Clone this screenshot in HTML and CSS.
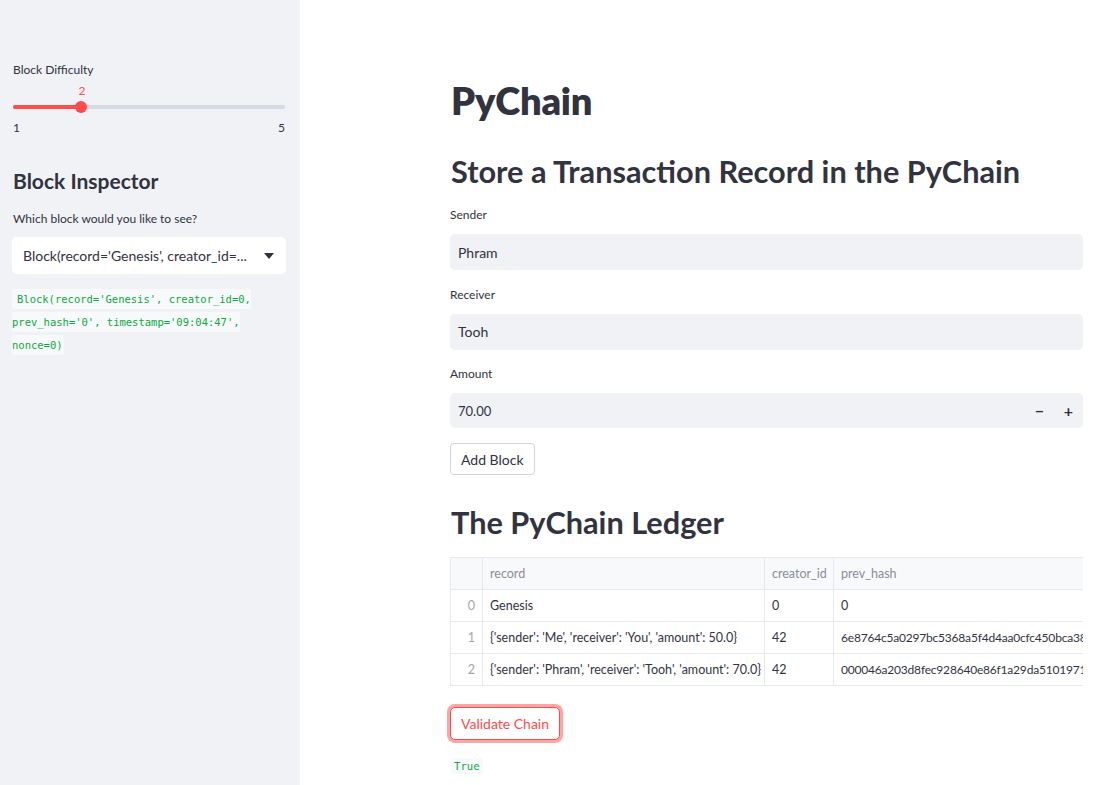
FILE: index.html
```html
<!DOCTYPE html>
<html>
<head>
<meta charset="utf-8">
<link rel="stylesheet" href="styles.css">
</head>
<body>
<div class="app">
  <aside class="sidebar">
    <div class="widget-label">Block Difficulty</div>
    <div class="slider">
      <div class="slider-value" style="left: 25%">2</div>
      <div class="slider-track">
        <div class="slider-fill" style="width: 25%"></div>
        <div class="slider-thumb" style="left: 25%"></div>
      </div>
      <div class="slider-ticks"><span>1</span><span>5</span></div>
    </div>
    <h2 class="side-title">Block Inspector</h2>
    <div class="widget-label">Which block would you like to see?</div>
    <div class="select">
      <span class="select-text">Block(record='Genesis', creator_id=...</span>
      <svg class="select-arrow" width="10" height="6" viewBox="0 0 10 6"><path d="M0 0 L10 0 L5 6 Z" fill="#31333f"/></svg>
    </div>
    <div class="side-code"><code>Block(record='Genesis', creator_id=0, prev_hash='0', timestamp='09:04:47', nonce=0)</code></div>
  </aside>
  <main class="main">
    <h1 class="title">PyChain</h1>
    <h2 class="section">Store a Transaction Record in the PyChain</h2>
    <div class="field">
      <div class="field-label">Sender</div>
      <div class="input">Phram</div>
    </div>
    <div class="field">
      <div class="field-label">Receiver</div>
      <div class="input">Tooh</div>
    </div>
    <div class="field">
      <div class="field-label">Amount</div>
      <div class="input number">
        <span class="num-value">70.00</span>
        <span class="step">−</span>
        <span class="step">+</span>
      </div>
    </div>
    <button class="btn">Add Block</button>
    <h2 class="section ledger">The PyChain Ledger</h2>
    <div class="table-wrap">
      <table class="table">
        <thead>
          <tr><th class="idx"></th><th class="c-rec">record</th><th class="c-cr">creator_id</th><th class="c-hash">prev_hash</th></tr>
        </thead>
        <tbody>
          <tr><td class="idx">0</td><td>Genesis</td><td>0</td><td>0</td></tr>
          <tr><td class="idx">1</td><td>{'sender': 'Me', 'receiver': 'You', 'amount': 50.0}</td><td>42</td><td class="hash">6e8764c5a0297bc5368a5f4d4aa0cfc450bca387f1d2</td></tr>
          <tr><td class="idx">2</td><td>{'sender': 'Phram', 'receiver': 'Tooh', 'amount': 70.0}</td><td>42</td><td class="hash">000046a203d8fec928640e86f1a29da510197154a3c2</td></tr>
        </tbody>
      </table>
    </div>
    <button class="btn btn-focus">Validate Chain</button>
    <div class="result"><code>True</code></div>
  </main>
</div>
</body>
</html>
```
FILE: styles.css
```css
* { box-sizing: border-box; }
html, body { margin: 0; padding: 0; }
body {
  font-family: "Lato", "Liberation Sans", sans-serif;
  color: #31333f;
  background: #ffffff;
  overflow: hidden;
}
.app {
  display: flex;
  width: 1114px;
  height: 785px;
}
.sidebar {
  width: 300px;
  flex: none;
  background: #f0f2f6;
  padding: 62px 14px 0 12px;
  display: flex;
  flex-direction: column;
}
.widget-label {
  font-size: 12px;
  line-height: 16px;
  height: 16px;
  margin-left: 1px;
}
.slider {
  position: relative;
  margin-top: 5px;
  padding: 0 1px;
}
.slider-value {
  position: relative;
  width: 0;
  display: flex;
  justify-content: center;
  color: #ff4b4b;
  font-size: 12px;
  line-height: 16px;
  margin-left: 1px;
  white-space: nowrap;
}
.slider-track {
  position: relative;
  height: 4px;
  margin-top: 6px;
  background: #d5dae4;
  border-radius: 2px;
}
.slider-fill {
  height: 4px;
  background: #ff4b4b;
  border-radius: 2px;
}
.slider-thumb {
  position: absolute;
  top: -4px;
  width: 12px;
  height: 12px;
  margin-left: -6px;
  border-radius: 50%;
  background: #ff4b4b;
}
.slider-ticks {
  display: flex;
  justify-content: space-between;
  font-size: 12px;
  line-height: 16px;
  margin-top: 11px;
}
.side-title {
  font-size: 21px;
  font-weight: 700;
  margin: 31px 0 0 1px;
  line-height: 28px;
}
.side-title + .widget-label { margin-top: 16px; }
.select {
  margin-top: 10px;
  height: 37px;
  background: #ffffff;
  border-radius: 5px;
  display: flex;
  align-items: center;
  padding: 0 12px 0 11px;
  font-size: 14px;
}
.select-text { flex: 1; white-space: nowrap; overflow: hidden; }
.select-arrow { flex: none; margin-left: 8px; }
.side-code {
  margin-top: 14px;
  font-size: 10.5px;
  line-height: 23px;
  width: 262px;
}
code {
  font-family: "DejaVu Sans Mono", "Liberation Mono", monospace;
  font-size: 10.6px;
  color: #09ab3b;
  background: #f8f9fb;
  padding: 2px 3px;
  border-radius: 3px;
}
.side-code code { font-size: 10.5px; padding: 4px 1px 4px 5px; }
.main {
  flex: 1;
  padding: 74px 31px 0 150px;
  display: flex;
  flex-direction: column;
  align-items: flex-start;
  min-width: 0;
}
.title {
  font-size: 38px;
  font-weight: 800;
  line-height: 52px;
  margin: 0 0 0 1px;
  letter-spacing: -0.2px;
}
.section {
  font-size: 30.7px;
  font-weight: 700;
  line-height: 40px;
  margin: 26px 0 0 1px;
}
.field { width: 100%; }
.field-label {
  font-size: 12px;
  line-height: 16px;
  margin: 0 0 11px 0;
}
.section + .field { margin-top: 15px; }
.field + .field { margin-top: 16.5px; }
.input {
  width: 100%;
  height: 36px;
  background: #f0f2f6;
  border-radius: 5px;
  font-size: 14px;
  display: flex;
  align-items: center;
  padding: 0 8px;
}
.number { height: 35px; padding-right: 0; }
.num-value { flex: 1; font-size: 13px; }
.step {
  width: 29px;
  text-align: center;
  font-size: 16px;
  font-weight: 700;
}
.btn {
  font-family: inherit;
  font-size: 14px;
  color: #31333f;
  background: #ffffff;
  border: 1px solid #d6d6d9;
  border-radius: 4px;
  height: 32px;
  padding: 0 10px;
  margin: 15px 0 0 0;
  cursor: pointer;
}
.section.ledger { margin-top: 28px; }
.table-wrap {
  margin-top: 14px;
  width: 100%;
  overflow: hidden;
}
.table {
  border-collapse: collapse;
  font-size: 12.5px;
  white-space: nowrap;
  table-layout: fixed;
  width: 900px;
}
.table th, .table td {
  border: 1px solid #e6e9ef;
  height: 32px;
  padding: 0 7px;
  text-align: left;
  overflow: hidden;
}
.table td.hash { font-size: 12px; letter-spacing: -0.2px; }
.table th {
  font-weight: 400;
  color: #8a8d99;
  background: #f8f9fb;
}
.table td.idx {
  color: #a3a6b0;
  text-align: right;
  padding-right: 7px;
}
.table th.idx { width: 32px; }
.table th.c-rec { width: 282px; }
.table th.c-cr { width: 69px; }
.table th.c-hash { width: 517px; }
.btn-focus {
  margin-top: 21px;
  height: 33px;
  padding: 0 10px;
  color: #ff4b4b;
  border-color: #ff4b4b;
  box-shadow: 0 0 0 3px rgba(255, 75, 75, 0.5);
  border-radius: 5px;
}
.result {
  margin-top: 16px;
  line-height: 16px;
  margin-left: 1px;
}
```
